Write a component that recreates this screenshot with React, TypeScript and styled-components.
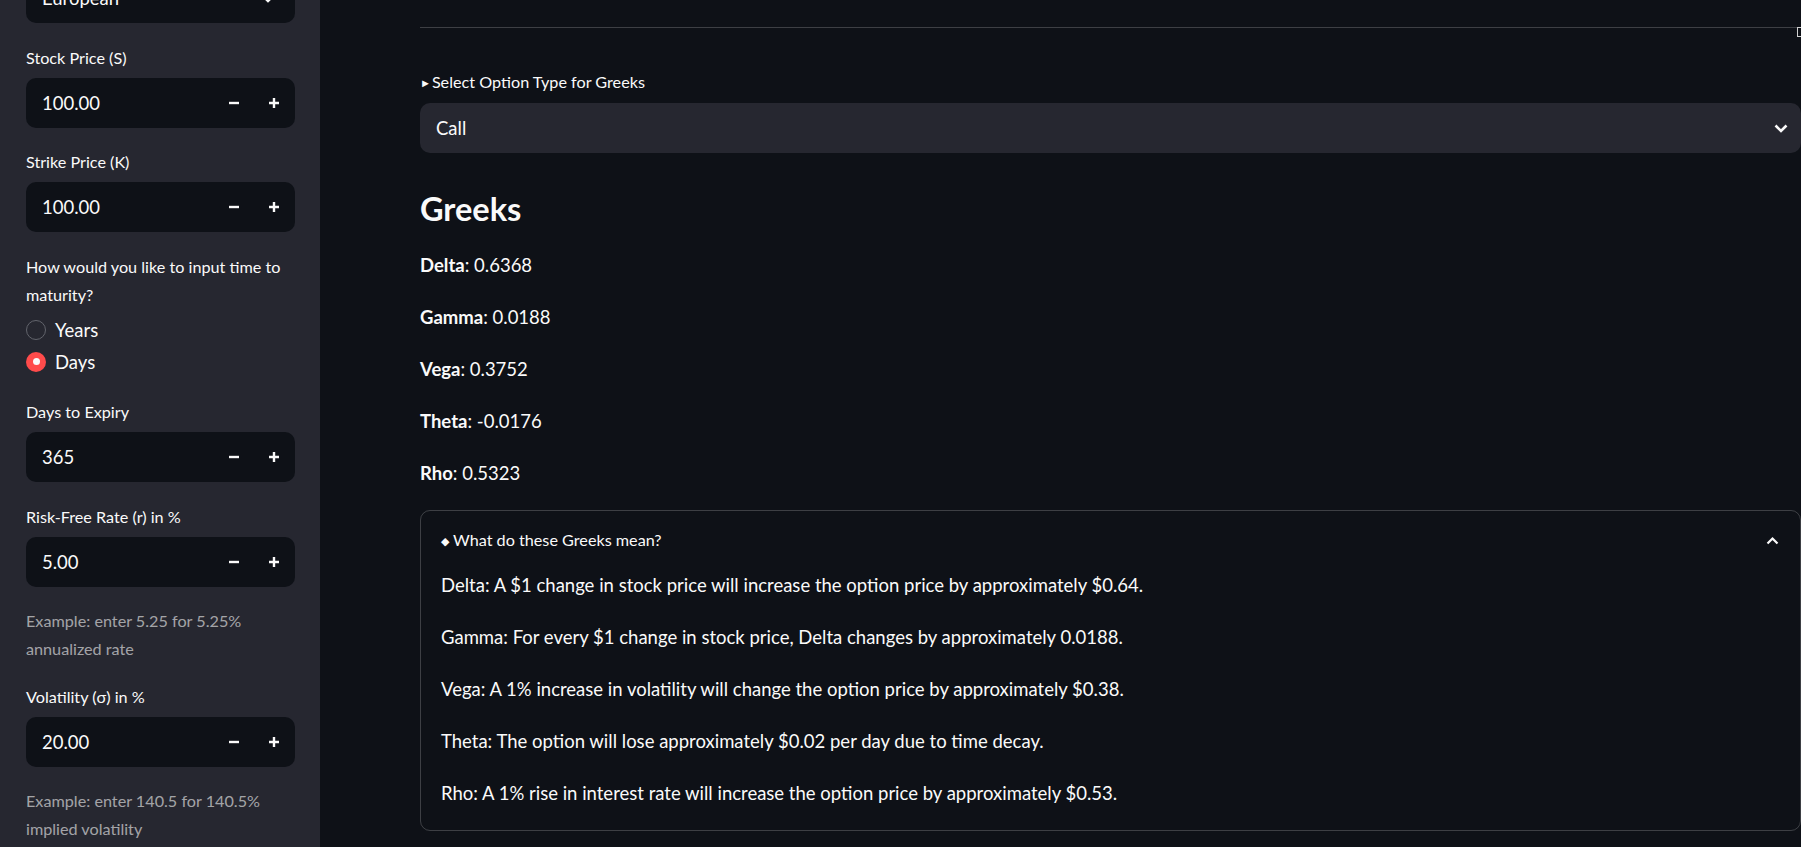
import React from "react";
import styled, { createGlobalStyle } from "styled-components";

const GlobalStyle = createGlobalStyle`
  html, body { margin: 0; padding: 0; background: #0e1117; overflow: hidden; }
  body { font-family: Lato, "Noto Sans", sans-serif; color: #fafafa; }
  * { box-sizing: border-box; }
`;

const Page = styled.div`
  display: flex;
  width: 1801px;
  height: 847px;
  overflow: hidden;
`;

const Sidebar = styled.aside`
  width: 320px;
  flex: none;
  background: #262730;
  padding: 0 25px 0 26px;
  display: flex;
  flex-direction: column;
  gap: 20.5px;
`;

const Widget = styled.div<{ $first?: boolean }>`
  display: flex;
  flex-direction: column;
  gap: 6px;
  margin-top: ${(p) => (p.$first ? "-27px" : "0")};
`;

const Label = styled.div`
  font-size: 16.2px;
  line-height: 28px;
  color: #fafafa;
`;

const InputBox = styled.div`
  height: 50px;
  border-radius: 10px;
  background: #0e1117;
  display: flex;
  align-items: center;
  padding-left: 16px;
  padding-right: 1px;
`;

const InputValue = styled.span`
  flex: 1;
  font-size: 18.5px;
  color: #fafafa;
`;

const StepButton = styled.button`
  width: 40px;
  height: 100%;
  border: none;
  background: transparent;
  display: flex;
  align-items: center;
  justify-content: center;
  padding: 0;
  color: #fafafa;
`;

const Caption = styled.div`
  font-size: 16.2px;
  line-height: 27.5px;
  color: rgba(250, 250, 250, 0.6);
`;

const RadioGroup = styled.div`
  display: flex;
  flex-direction: column;
  margin-top: -1px;
`;

const RadioRow = styled.div`
  height: 32px;
  display: flex;
  align-items: center;
  gap: 9px;
  font-size: 18.5px;
`;

const RadioDot = styled.span<{ $checked?: boolean }>`
  width: 20px;
  height: 20px;
  border-radius: 50%;
  flex: none;
  display: flex;
  align-items: center;
  justify-content: center;
  background: ${(p) => (p.$checked ? "#ff4b4b" : "transparent")};
  border: ${(p) => (p.$checked ? "none" : "1.5px solid #62646c")};
  &::after {
    content: "";
    display: ${(p) => (p.$checked ? "block" : "none")};
    width: 7px;
    height: 7px;
    border-radius: 50%;
    background: #fafafa;
  }
`;

const SidebarSelect = styled.div`
  height: 50px;
  border-radius: 10px;
  background: #0e1117;
  display: flex;
  align-items: center;
  justify-content: space-between;
  padding: 0 20px 0 16px;
  font-size: 18.5px;
`;

const Main = styled.main`
  flex: 1;
  padding-left: 100px;
  overflow: hidden;
`;

const Content = styled.div`
  width: 1381px;
  display: flex;
  flex-direction: column;
`;

const RuleRow = styled.div`
  display: flex;
  align-items: center;
  height: 12px;
  margin-top: 21px;
`;

const Rule = styled.div`
  flex: 1;
  height: 1px;
  background: rgba(250, 250, 250, 0.2);
`;

const Marker = styled.span`
  width: 4px;
  height: 10px;
  border: 1.5px solid #d0d0d0;
  border-right: none;
  margin-top: 9px;
`;

const SelectWidget = styled.div`
  display: flex;
  flex-direction: column;
  gap: 6px;
  margin-top: 35px;
`;

const Triangle = styled.span`
  font-size: 11px;
  margin-right: 1px;
  vertical-align: 1px;
`;

const MainSelect = styled.div`
  height: 50px;
  border-radius: 10px;
  background: #262730;
  display: flex;
  align-items: center;
  justify-content: space-between;
  padding: 0 13px 0 16px;
  font-size: 18.5px;
`;

const Heading = styled.h3`
  margin: 35px 0 0;
  font-size: 32.5px;
  line-height: 42px;
  font-weight: 700;
  color: #fafafa;
`;

const GreekList = styled.div`
  display: flex;
  flex-direction: column;
  gap: 20px;
  margin-top: 19px;
`;

const Para = styled.p`
  margin: 0;
  font-size: 18.5px;
  line-height: 32px;
  color: #fafafa;
`;

const Expander = styled.div`
  margin-top: 21px;
  border: 1px solid rgba(250, 250, 250, 0.2);
  border-radius: 10px;
  display: flex;
  flex-direction: column;
`;

const ExpanderHeader = styled.div`
  display: flex;
  align-items: center;
  justify-content: space-between;
  padding: 15px 21px 14px 20px;
  font-size: 16.2px;
  line-height: 28px;
`;

const Diamond = styled.span`
  font-size: 11px;
  margin-right: 4px;
  vertical-align: 1px;
`;

const ExpanderBody = styled.div`
  display: flex;
  flex-direction: column;
  gap: 20px;
  padding: 0 20px 21px;
`;

const Minus = () => (
  <svg width="12" height="12" viewBox="0 0 12 12">
    <path d="M1 6h10" stroke="#fafafa" strokeWidth="2.4" strokeLinecap="butt" />
  </svg>
);

const Plus = () => (
  <svg width="12" height="12" viewBox="0 0 12 12">
    <path d="M1 6h10M6 1v10" stroke="#fafafa" strokeWidth="2.4" strokeLinecap="butt" />
  </svg>
);

const ChevronDown = () => (
  <svg width="14" height="9" viewBox="0 0 14 9">
    <path d="M1.5 1.5L7 7l5.5-5.5" stroke="#fafafa" strokeWidth="2.6" fill="none" />
  </svg>
);

const ChevronUp = () => (
  <svg width="13" height="9" viewBox="0 0 13 9">
    <path d="M1.5 7.5L6.5 2.5l5 5" stroke="#fafafa" strokeWidth="2.2" fill="none" />
  </svg>
);

const NumberInput = ({ label, value }: { label: string; value: string }) => (
  <Widget>
    <Label>{label}</Label>
    <InputBox>
      <InputValue>{value}</InputValue>
      <StepButton aria-label="decrement">
        <Minus />
      </StepButton>
      <StepButton aria-label="increment">
        <Plus />
      </StepButton>
    </InputBox>
  </Widget>
);

const greeks = [
  ["Delta", "0.6368"],
  ["Gamma", "0.0188"],
  ["Vega", "0.3752"],
  ["Theta", "-0.0176"],
  ["Rho", "0.5323"],
];

const meanings = [
  "Delta: A $1 change in stock price will increase the option price by approximately $0.64.",
  "Gamma: For every $1 change in stock price, Delta changes by approximately 0.0188.",
  "Vega: A 1% increase in volatility will change the option price by approximately $0.38.",
  "Theta: The option will lose approximately $0.02 per day due to time decay.",
  "Rho: A 1% rise in interest rate will increase the option price by approximately $0.53.",
];

export default function App() {
  return (
    <>
      <GlobalStyle />
      <Page>
        <Sidebar>
          <Widget $first>
            <SidebarSelect>
              <span>European</span>
              <ChevronDown />
            </SidebarSelect>
          </Widget>
          <NumberInput label="Stock Price (S)" value="100.00" />
          <NumberInput label="Strike Price (K)" value="100.00" />
          <Widget>
            <Label>How would you like to input time to maturity?</Label>
            <RadioGroup>
              <RadioRow>
                <RadioDot />
                Years
              </RadioRow>
              <RadioRow>
                <RadioDot $checked />
                Days
              </RadioRow>
            </RadioGroup>
          </Widget>
          <NumberInput label="Days to Expiry" value="365" />
          <NumberInput label="Risk-Free Rate (r) in %" value="5.00" />
          <Caption>Example: enter 5.25 for 5.25% annualized rate</Caption>
          <NumberInput label="Volatility (σ) in %" value="20.00" />
          <Caption>Example: enter 140.5 for 140.5% implied volatility</Caption>
        </Sidebar>
        <Main>
          <Content>
            <RuleRow>
              <Rule />
              <Marker />
            </RuleRow>
            <SelectWidget>
              <Label>
                <Triangle>►</Triangle>Select Option Type for Greeks
              </Label>
              <MainSelect>
                <span>Call</span>
                <ChevronDown />
              </MainSelect>
            </SelectWidget>
            <Heading>Greeks</Heading>
            <GreekList>
              {greeks.map(([name, val]) => (
                <Para key={name}>
                  <strong>{name}</strong>: {val}
                </Para>
              ))}
            </GreekList>
            <Expander>
              <ExpanderHeader>
                <span>
                  <Diamond>◆</Diamond>What do these Greeks mean?
                </span>
                <ChevronUp />
              </ExpanderHeader>
              <ExpanderBody>
                {meanings.map((m) => (
                  <Para key={m}>{m}</Para>
                ))}
              </ExpanderBody>
            </Expander>
          </Content>
        </Main>
      </Page>
    </>
  );
}
